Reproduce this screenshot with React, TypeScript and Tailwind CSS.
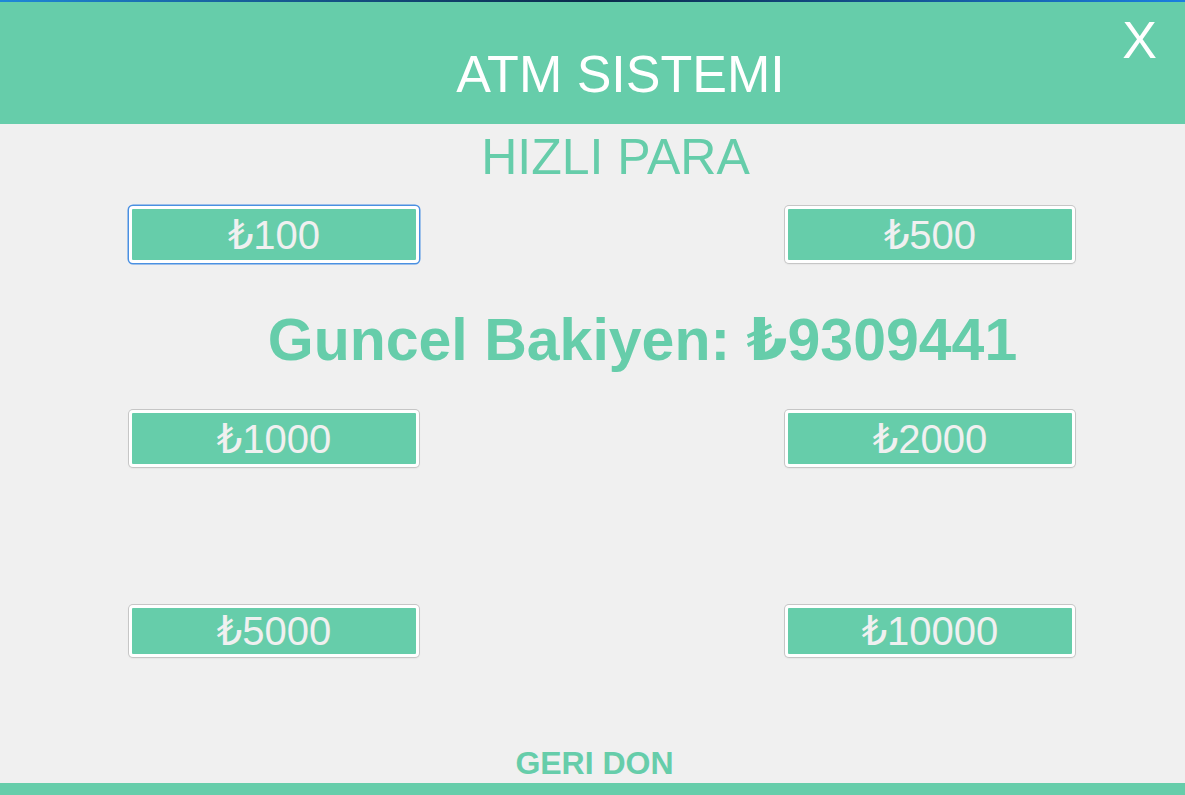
const font = { fontFamily: '"Liberation Sans", Arial, "DejaVu Sans", sans-serif' };

function CashButton({ amount, focused, tall = true }: { amount: string; focused?: boolean; tall?: boolean }) {
    return (
        <button
            className={`w-[290px] ${tall ? 'h-[57px]' : 'h-[52px]'} rounded-[4px] border-[3px] border-white bg-[#66cdaa] text-[40px] leading-none text-[#f0f0f0] ${
                focused ? 'shadow-[0_0_0_1.5px_#4a90e2]' : 'shadow-[0_0_0_1px_#c6c6c6,0_1px_2px_rgba(0,0,0,0.12)]'
            }`}
        >
            ₺{amount}
        </button>
    );
}

export default function App() {
    return (
        <div className="w-[1185px] h-[795px] bg-[#f0f0f0] flex flex-col overflow-hidden" style={font}>
            <div className="h-[2px] bg-gradient-to-r from-[#1e88d8] via-[#0b2a4a] to-[#1a7fe0]" />

            <header className="h-[122px] bg-[#66cdaa] relative flex items-center justify-center pl-[56px] pt-[22px]">
                <h1 className="text-[52px] leading-none text-white">ATM SISTEMI</h1>
                <button className="absolute right-[28px] top-[12px] text-[52px] leading-none text-white">X</button>
            </header>

            <h2 className="mt-[8px] text-center pl-[46px] text-[50px] leading-[50px] text-[#66cdaa]">HIZLI PARA</h2>

            <div className="mt-[24px] flex justify-between pl-[129px] pr-[110px]">
                <CashButton amount="100" focused />
                <CashButton amount="500" />
            </div>

            <p className="mt-[47px] text-center pl-[100px] text-[59px] leading-[60px] font-bold text-[#66cdaa]">
                Guncel Bakiyen: ₺9309441
            </p>

            <div className="mt-[40px] flex justify-between pl-[129px] pr-[110px]">
                <CashButton amount="1000" />
                <CashButton amount="2000" />
            </div>

            <div className="mt-[138px] flex justify-between pl-[129px] pr-[110px]">
                <CashButton amount="5000" tall={false} />
                <CashButton amount="10000" tall={false} />
            </div>

            <button className="mt-[90px] self-center pl-[4px] text-[32px] leading-[32px] font-bold text-[#66cdaa]">GERI DON</button>

            <div className="mt-auto h-[12px] bg-[#66cdaa]" />
        </div>
    );
}
